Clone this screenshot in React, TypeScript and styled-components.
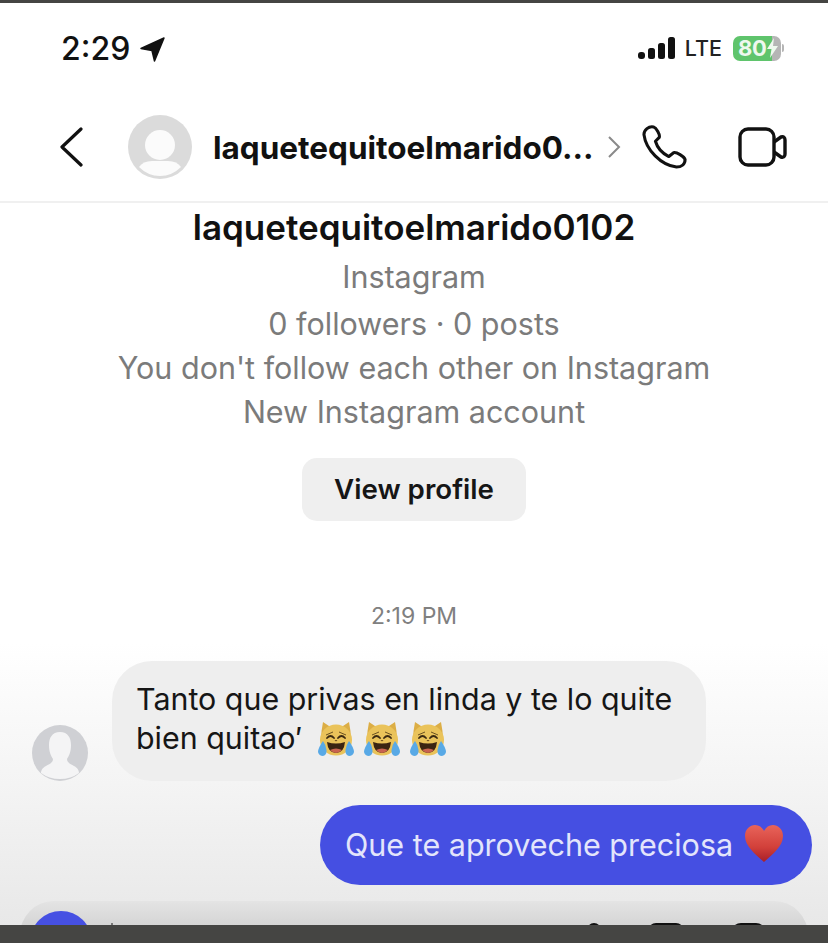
import React from "react";
import styled, { createGlobalStyle } from "styled-components";

const Global = createGlobalStyle`
  html, body { margin: 0; padding: 0; background: #fff; }
  body { font-family: Inter, "Liberation Sans", sans-serif; }
`;

const Page = styled.div`
  width: 828px;
  height: 943px;
  overflow: hidden;
  display: flex;
  flex-direction: column;
`;
const Edge = styled.div<{ $h: number }>`
  flex: none;
  height: ${(p) => p.$h}px;
  background: #454543;
`;
const Screen = styled.main`
  flex: 1;
  min-height: 0;
  overflow: hidden;
  display: flex;
  flex-direction: column;
  background: linear-gradient(#fff 0, #fff 640px, #f4f4f4 780px, #e8e8e8 922px);
`;
const StatusBar = styled.div`
  height: 90px;
  flex: none;
  box-sizing: border-box;
  padding: 27px 44px 0 61px;
  display: flex;
  justify-content: space-between;
  align-items: flex-start;
`;
const Time = styled.div`
  display: flex;
  align-items: center;
  gap: 10px;
  font-size: 32px;
  line-height: 38px;
  font-weight: 500;
  color: #111;
`;
const StatusRight = styled.div`
  display: flex;
  align-items: center;
  height: 36px;
  gap: 9px;
`;
const Lte = styled.span`
  font-size: 21.5px;
  font-weight: 500;
  color: #222;
  margin-right: 2px;
`;
const BatteryWrap = styled.div`
  display: flex;
  align-items: center;
  gap: 1px;
`;
const BatteryCap = styled.div`
  width: 2px;
  height: 8px;
  border-radius: 0 2px 2px 0;
  background: #b5b5b5;
`;
const Battery = styled.div`
  width: 48px;
  height: 25px;
  border-radius: 7px;
  background: linear-gradient(90deg, #5fc46c 0 81%, #b5b5b5 81%);
  color: #eef8ee;
  font-size: 22px;
  line-height: 25px;
  font-weight: 700;
  box-sizing: border-box;
  padding-left: 5px;
  display: flex;
  align-items: center;
  letter-spacing: -0.3px;
`;
const Header = styled.header`
  height: 110px;
  flex: none;
  box-sizing: border-box;
  padding: 0 40px 0 59px;
  display: flex;
  align-items: center;
  border-bottom: 2px solid #f0f0f0;
`;
const NameLine = styled.div`
  width: 381px;
  flex: none;
  font-size: 31.5px;
  font-weight: 700;
  color: #111;
  margin-left: 21px;
  white-space: nowrap;
`;
const HeaderAvatar = styled.div`
  margin-left: 45px;
  width: 64px;
  height: 64px;
  flex: none;
`;
const Profile = styled.section`
  display: flex;
  flex-direction: column;
  align-items: center;
  flex: none;
`;
const ProfileName = styled.h1`
  margin: 2px 0 0;
  font-size: 35px;
  line-height: 44px;
  font-weight: 600;
  color: #111;
`;
const Meta = styled.div<{ $top: number }>`
  margin-top: ${(p) => p.$top}px;
  font-size: 30.5px;
  line-height: 44px;
  font-weight: 400;
  color: #7b7b7b;
  white-space: nowrap;
`;
const ViewButton = styled.button`
  margin-top: 24px;
  width: 224px;
  height: 63px;
  padding: 0 0 2px;
  border: none;
  border-radius: 15px;
  background: #efefef;
  color: #161616;
  font: 600 27.7px Inter, sans-serif;
`;
const Stamp = styled.div`
  margin-top: 79px;
  height: 32px;
  text-align: center;
  font-size: 23px;
  line-height: 32px;
  color: #808080;
`;
const ThemRow = styled.div`
  margin-top: 29px;
  padding-left: 32px;
  display: flex;
  align-items: flex-end;
  gap: 24px;
`;
const SmallAvatar = styled.div`
  width: 56px;
  height: 56px;
  flex: none;
`;
const ThemBubble = styled.div`
  width: 594px;
  height: 120px;
  box-sizing: border-box;
  padding: 19px 0 0 24px;
  border-radius: 40px;
  background: #eeeeee;
  color: #161616;
  font-size: 30.4px;
  line-height: 39px;
  white-space: nowrap;
`;
const EmojiLine = styled.div`
  display: flex;
  align-items: center;
`;
const Cats = styled.span`
  display: inline-flex;
  gap: 8px;
  margin-left: 15px;
`;
const MeRow = styled.div`
  margin-top: 24px;
  padding-right: 16px;
  display: flex;
  justify-content: flex-end;
`;
const MeBubble = styled.div`
  width: 492px;
  height: 80px;
  box-sizing: border-box;
  padding: 0 0 2px 25px;
  border-radius: 40px;
  background: #454fe2;
  color: #e3e5fb;
  font-size: 30.5px;
  display: flex;
  align-items: center;
  gap: 12px;
  white-space: nowrap;
`;
const Composer = styled.div`
  margin: 16px 20px 0;
  height: 80px;
  flex: none;
  border-radius: 34px;
  background: linear-gradient(#e4e4e4, #d5d5d5 24px);
  box-sizing: border-box;
  padding: 10px 42px 0 10px;
  display: flex;
  justify-content: space-between;
`;
const ComposerLeft = styled.div`
  display: flex;
  gap: 19px;
`;
const Cursor = styled.div`
  width: 2px;
  height: 10px;
  margin-top: 12px;
  background: #777;
`;
const Camera = styled.div`
  width: 62px;
  height: 62px;
  border-radius: 50%;
  background: #4650e3;
`;
const ComposerIcons = styled.div`
  display: flex;
  gap: 47px;
  padding-top: 12px;
`;
const IconStub = styled.div<{ $w: number; $r: number }>`
  width: ${(p) => p.$w}px;
  height: 30px;
  border: 3px solid #111;
  border-radius: ${(p) => p.$r}px;
  box-sizing: border-box;
`;

const Cat = () => (
  <svg width="38" height="36" viewBox="0 0 38 36">
    <path d="M6 1 L15 7 H23 L32 1 Q34 10 34 20 H4 Q4 10 6 1Z" fill="#dcae45" />
    <ellipse cx="19" cy="19" rx="16" ry="15.5" fill="#eac35a" />
    <path d="M9 14 L16 11 M29 14 L22 11" stroke="#6b5222" strokeWidth="1" fill="none" />
    <path d="M10 17 q3.5 -4 7 0 M21 17 q3.5 -4 7 0" fill="none" stroke="#3b2a12" strokeWidth="1.8" strokeLinecap="round" />
    <path d="M10 21 Q19 24 28 21 Q27 32 19 32 Q11 32 10 21Z" fill="#3a2412" />
    <path d="M13 29 Q19 26 25 29 Q22 32 19 32 Q16 32 13 29Z" fill="#c9634f" />
    <path d="M17.5 19 h3 l-1.5 1.5z" fill="#6b4a1c" />
    <path d="M6 20 Q1 27 1 31 Q2 35 6 35 Q10 34 9.5 29 Q9 24 6 20Z" fill="#58a9e6" />
    <path d="M32 20 Q37 27 37 31 Q36 35 32 35 Q28 34 28.5 29 Q29 24 32 20Z" fill="#58a9e6" />
  </svg>
);

const Heart = () => (
  <svg width="38" height="38" viewBox="0 0 38 38">
    <defs>
      <linearGradient id="hg" x1="0" y1="0" x2="0" y2="1">
        <stop offset="0" stopColor="#e8645a" />
        <stop offset="0.6" stopColor="#d2403a" />
        <stop offset="1" stopColor="#a81f28" />
      </linearGradient>
    </defs>
    <path d="M19 37 C10 29 0 21 0 11 C0 4 5 0 10 0 C14 0 17 2 19 6 C21 2 24 0 28 0 C33 0 38 4 38 11 C38 21 28 29 19 37Z" fill="url(#hg)" />
  </svg>
);

const HeaderPerson = () => (
  <svg width="64" height="64" viewBox="0 0 64 64">
    <circle cx="32" cy="32" r="32" fill="#dbdbdb" />
    <circle cx="32" cy="30" r="15" fill="#fbfbfb" />
    <path d="M11 52 Q15 46 24 46 H40 Q49 46 53 52 Q44 61 32 61 Q20 61 11 52Z" fill="#fbfbfb" />
  </svg>
);

const SmallPerson = () => (
  <svg width="56" height="56" viewBox="0 0 56 56">
    <circle cx="28" cy="28" r="28" fill="#cfd0d4" />
    <path d="M28 7 C20 7 17 13 17 20 C17 27 19 31 21 34 C21 38 17 39 14 41 C10 43 9 46 9 48 Q17 54 28 54 Q39 54 47 48 C47 46 46 43 42 41 C39 39 35 38 35 34 C37 31 39 27 39 20 C39 13 36 7 28 7Z" fill="#f4f4f5" />
  </svg>
);

export default function App() {
  return (
    <Page>
      <Global />
      <Edge $h={3} />
      <Screen>
        <StatusBar>
          <Time>
            2:29
            <svg width="25" height="25" viewBox="0 0 25 25">
              <path d="M1 11.5 L24 1 L14.5 24 L12 13.5 Z" fill="#111" stroke="#111" strokeWidth="1.5" strokeLinejoin="round" />
            </svg>
          </Time>
          <StatusRight>
            <svg width="38" height="24" viewBox="0 0 38 24">
              <rect x="0" y="16" width="7" height="7" rx="3" fill="#111" />
              <rect x="10" y="12" width="7" height="11" rx="2.5" fill="#111" />
              <rect x="20" y="7" width="7" height="16" rx="2.5" fill="#111" />
              <rect x="30" y="1" width="7" height="22" rx="2.5" fill="#111" />
            </svg>
            <Lte>LTE</Lte>
            <BatteryWrap>
              <Battery>
                80
                <svg width="11" height="20" viewBox="0 0 11 20">
                  <path d="M7 0 L0 11 H4.5 L3 20 L11 8 H6 Z" fill="#eef8ee" />
                </svg>
              </Battery>
              <BatteryCap />
            </BatteryWrap>
          </StatusRight>
        </StatusBar>
        <Header>
          <svg width="24" height="40" viewBox="0 0 24 40" style={{ flex: "none" }}>
            <path d="M22 2 L3 20 L22 38" fill="none" stroke="#111" strokeWidth="3.2" strokeLinecap="round" strokeLinejoin="round" />
          </svg>
          <HeaderAvatar><HeaderPerson /></HeaderAvatar>
          <NameLine>laquetequitoelmarido0...</NameLine>
          <svg width="14" height="24" viewBox="0 0 14 24" style={{ flex: "none", marginLeft: 13 }}>
            <path d="M2 2 L12 12 L2 22" fill="none" stroke="#8a8a8a" strokeWidth="2" />
          </svg>
          <svg width="46" height="44" viewBox="0 0 48 46" style={{ flex: "none", marginLeft: 21 }}>
            <path d="M12 2 C7 1 2 5 2 10 C4 26 20 42 36 44 C41 44 45 41 45 36 C44 33 36 28 33 29 L28 33 C22 30 16 24 14 17 L18 13 C19 10 15 3 12 2Z" fill="none" stroke="#111" strokeWidth="3.2" strokeLinejoin="round" />
          </svg>
          <svg width="49" height="40" viewBox="0 0 49 40" style={{ flex: "none", marginLeft: 50 }}>
            <rect x="2" y="2" width="34" height="36" rx="8" fill="none" stroke="#111" strokeWidth="3.4" />
            <path d="M36 15 L43 10 Q47 9 47 13 V27 Q47 31 43 30 L36 25" fill="none" stroke="#111" strokeWidth="3.4" strokeLinejoin="round" />
          </svg>
        </Header>
        <Profile>
          <ProfileName>laquetequitoelmarido0102</ProfileName>
          <Meta $top={6}>Instagram</Meta>
          <Meta $top={3}>0 followers · 0 posts</Meta>
          <Meta $top={0}>You don't follow each other on Instagram</Meta>
          <Meta $top={0}>New Instagram account</Meta>
          <ViewButton>View profile</ViewButton>
        </Profile>
        <Stamp>2:19 PM</Stamp>
        <ThemRow>
          <SmallAvatar><SmallPerson /></SmallAvatar>
          <ThemBubble>
            Tanto que privas en linda y te lo quite
            <EmojiLine>
              bien quitao′
              <Cats><Cat /><Cat /><Cat /></Cats>
            </EmojiLine>
          </ThemBubble>
        </ThemRow>
        <MeRow>
          <MeBubble>Que te aproveche preciosa <Heart /></MeBubble>
        </MeRow>
        <Composer>
          <ComposerLeft>
            <Camera />
            <Cursor />
          </ComposerLeft>
          <ComposerIcons>
            <IconStub $w={14} $r={7} />
            <IconStub $w={36} $r={8} />
            <IconStub $w={35} $r={10} />
          </ComposerIcons>
        </Composer>
      </Screen>
      <Edge $h={18} />
    </Page>
  );
}
